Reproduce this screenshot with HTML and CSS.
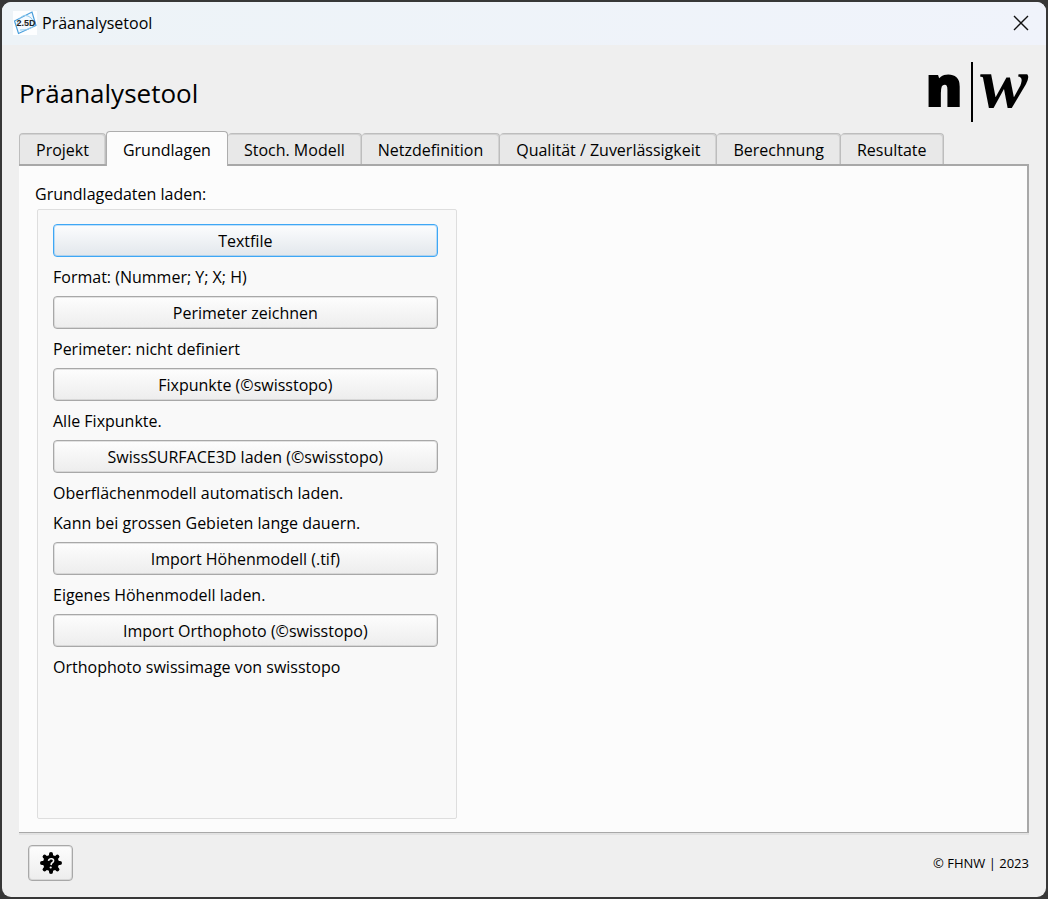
FILE: index.html
```html
<!DOCTYPE html>
<html lang="de">
<head>
<meta charset="utf-8">
<title>Präanalysetool</title>
<link rel="stylesheet" href="styles.css">
</head>
<body>
<div class="window">
  <header class="titlebar">
    <svg class="app-icon" viewBox="0 0 24 24" aria-hidden="true">
      <rect width="24" height="24" fill="#fdfeff"/>
      <path d="M1.500 10L19 1l4 13.500L5.500 22.500z" fill="#f4faff" stroke="#4a9fdc" stroke-width="1.200"/>
      <path d="M4 13Q8 2 15 5T20 16Q13 20 7 19" fill="none" stroke="#8fcbef" stroke-width="1"/>
      <text x="13" y="15" class="app-icon-text">2.5D</text>
    </svg>
    <span class="titlebar-text">Präanalysetool</span>
    <button class="close" type="button" aria-label="Schliessen">
      <svg viewBox="0 0 16 16" width="16" height="16"><path d="M1 1l14 14M15 1L1 15" fill="none" stroke="#111" stroke-width="1.400"/></svg>
    </button>
  </header>
  <main class="content">
    <div class="heading">
      <h1>Präanalysetool</h1>
      <svg class="logo" viewBox="0 0 102 60" role="img" aria-label="n|w">
        <text x="-1" y="44" class="logo-n">n</text>
        <rect x="44" y="0" width="2" height="60"/>
        <text x="53" y="45" class="logo-w">w</text>
      </svg>
    </div>
    <div class="tabs" role="tablist">
      <button class="tab" type="button" role="tab">Projekt</button>
      <button class="tab tab-active" type="button" role="tab" aria-selected="true">Grundlagen</button>
      <button class="tab" type="button" role="tab">Stoch. Modell</button>
      <button class="tab" type="button" role="tab">Netzdefinition</button>
      <button class="tab" type="button" role="tab">Qualität / Zuverlässigkeit</button>
      <button class="tab" type="button" role="tab">Berechnung</button>
      <button class="tab" type="button" role="tab">Resultate</button>
    </div>
    <section class="panel" role="tabpanel">
      <h2>Grundlagedaten laden:</h2>
      <div class="group">
        <button class="btn btn-default" type="button">Textfile</button>
        <p>Format: (Nummer; Y; X; H)</p>
        <button class="btn" type="button">Perimeter zeichnen</button>
        <p>Perimeter: nicht definiert</p>
        <button class="btn" type="button">Fixpunkte (©swisstopo)</button>
        <p>Alle Fixpunkte.</p>
        <button class="btn" type="button">SwissSURFACE3D laden (©swisstopo)</button>
        <p>Oberflächenmodell automatisch laden.</p>
        <p>Kann bei grossen Gebieten lange dauern.</p>
        <button class="btn" type="button">Import Höhenmodell (.tif)</button>
        <p>Eigenes Höhenmodell laden.</p>
        <button class="btn" type="button">Import Orthophoto (©swisstopo)</button>
        <p>Orthophoto swissimage von swisstopo</p>
      </div>
    </section>
    <footer class="footer">
      <button class="btn help" type="button" aria-label="Hilfe">
        <svg viewBox="0 0 22 22" width="22" height="22">
          <circle cx="11" cy="11" r="8"/>
          <path d="M11 2v18M2 11h18M4.600 4.600l12.800 12.800M17.400 4.600L4.600 17.400" stroke="#000" stroke-width="4" stroke-linecap="round"/>
          <path d="M8.500 8.800Q9 6.500 11.500 6.700T13.500 9.200Q13.200 10.500 11.600 11.200L11 13" fill="none" stroke="#f6f6f6" stroke-width="1.600"/>
          <circle cx="10.700" cy="15.500" r="1.100" fill="#f6f6f6"/>
        </svg>
      </button>
      <span class="copyright">© FHNW | 2023</span>
    </footer>
  </main>
</div>
</body>
</html>
```
FILE: styles.css
```css
* { box-sizing: border-box; }
body {
  margin: 0;
  min-height: 100vh;
  display: flex;
  padding: 2px;
  background: #373737;
  color: #000;
  font: 16px/24px "Open Sans", "Noto Sans", sans-serif;
}
button { font: inherit; color: inherit; }
h1, h2, p { margin: 0; font-weight: 400; }
.window {
  flex: 1;
  display: flex;
  flex-direction: column;
  background: #efefef;
  border-radius: 9px;
  overflow: hidden;
}
.titlebar {
  display: flex;
  align-items: center;
  gap: 5px;
  height: 43px;
  padding: 0 17px 2px 11px;
  background: linear-gradient(90deg, #edf3f7, #f0f3fb);
}
.app-icon { width: 24px; height: 24px; }
.app-icon-text { font: bold 9px "Liberation Sans", sans-serif; text-anchor: middle; fill: #222; }
.titlebar-text { flex: 1; }
.close { display: flex; padding: 0; border: 0; background: none; }
.content {
  flex: 1;
  display: flex;
  flex-direction: column;
  padding: 17px 17px 16px;
}
.heading { display: flex; justify-content: space-between; height: 69px; }
.heading h1 { font-size: 26px; line-height: 62px; }
.logo { width: 102px; height: 60px; overflow: visible; }
.logo-n { font: 900 54px "Noto Sans", "Open Sans", sans-serif; stroke: #000; stroke-width: 2px; }
.logo-w { font: italic bold 72px "Liberation Serif", serif; }
.tabs { display: flex; align-items: flex-end; }
.tab {
  height: 31px;
  padding: 2px 16px 0;
  border: 1px solid #bdbdbd;
  border-width: 1px 1px 0 0;
  border-radius: 4px 4px 0 0;
  background: #e8e8e8;
  box-shadow: inset -1px 1px 0 #d2d2d2;
  white-space: nowrap;
}
.tab:first-child { border-left-width: 1px; }
.tab-active {
  height: 35px;
  margin-bottom: -2px;
  padding-top: 1px;
  border-color: #adadad;
  border-width: 1px;
  border-bottom: 0;
  background: #fcfcfc;
  box-shadow: none;
  position: relative;
}
.panel {
  flex: 1;
  display: flex;
  flex-direction: column;
  align-items: flex-start;
  padding: 16px 16px 13px;
  border: 2px solid #a8a8a8;
  border-width: 2px 2px 1px 0;
  background: #fcfcfc;
  box-shadow: 0 2px 0 #e2e2e2;
}
.panel h2 { font-size: 16px; line-height: 24px; }
.group {
  flex: 1;
  display: flex;
  flex-direction: column;
  gap: 6px;
  width: 43%;
  margin: 3px 2px 0;
  padding: 13px 18px 14px 15px;
  border: 1px solid #dedede;
  border-radius: 2px;
  background: #f9f9f9;
}
.btn {
  height: 33px;
  padding: 0 8px;
  border: 1px solid #a8a8a8;
  border-radius: 4px;
  background: linear-gradient(#fdfdfd, #ededed);
  box-shadow: inset 0 0 0 1px #a8a8a850;
}
.group .btn { margin: 1px 0 2px; }
.btn-default {
  border-color: #3ea7f5;
  background: linear-gradient(#fcfdfe, #e2e7ec);
  box-shadow: inset 0 0 0 1px #3ea7f550;
}
.footer {
  display: flex;
  align-items: center;
  justify-content: space-between;
  margin-top: 12px;
  padding-left: 9px;
}
.help {
  display: flex;
  align-items: center;
  justify-content: center;
  width: 45px;
  height: 36px;
}
.copyright { font-size: 13px; }
```
